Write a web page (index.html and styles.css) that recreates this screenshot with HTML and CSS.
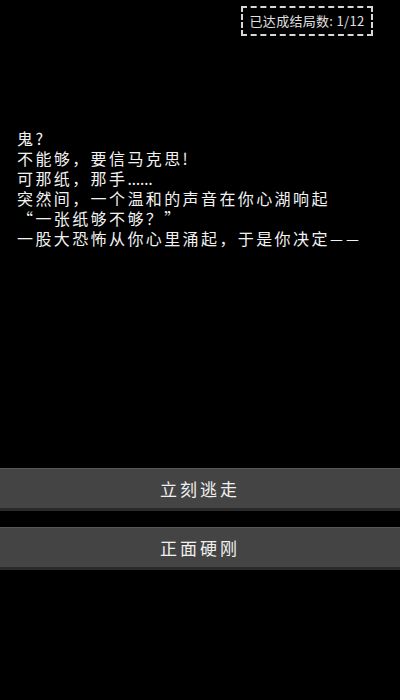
FILE: index.html
```html
<!DOCTYPE html>
<html lang="zh">
<head>
<meta charset="utf-8">
<link rel="stylesheet" href="styles.css">
</head>
<body>
<div class="page">
  <div class="status-row">
    <div class="status">已达成结局数: 1/12</div>
  </div>
  <div class="story">
    <p>鬼?</p>
    <p>不能够，要信马克思!</p>
    <p>可那纸，那手<span class="dots">……</span></p>
    <p>突然间，一个温和的声音在你心湖响起</p>
    <p>“一张纸够不够？”</p>
    <p>一股大恐怖从你心里涌起，于是你决定<span class="dash">—</span><span class="dash">—</span></p>
  </div>
  <div class="choices">
    <button class="choice">立刻逃走</button>
    <button class="choice">正面硬刚</button>
  </div>
</div>
</body>
</html>
```
FILE: styles.css
```css
html, body {
  margin: 0;
  padding: 0;
  background: #000;
}
body {
  width: 400px;
  height: 700px;
  overflow: hidden;
  font-family: "Noto Sans CJK SC", "Noto Sans", sans-serif;
  color: #f2f2f2;
}
.page {
  display: flex;
  flex-direction: column;
}
.status-row {
  display: flex;
  justify-content: flex-end;
  padding: 6px 27px 0 0;
}
.status {
  box-sizing: border-box;
  width: 132px;
  height: 30px;
  border: 2px dashed #d8d8d8;
  font-size: 13px;
  line-height: 26px;
  text-align: center;
  color: #e0e0e0;
  letter-spacing: 0.3px;
}
.story {
  margin-top: 92px;
  padding-left: 17px;
  font-size: 16px;
  line-height: 20px;
  letter-spacing: 2.4px;
}
.story p {
  margin: 0;
  height: 20px;
  white-space: nowrap;
}
.dots {
  font-family: "Noto Sans", sans-serif;
  letter-spacing: 0;
}
.dash {
  display: inline-block;
  width: 12px;
  margin-right: 4px;
  letter-spacing: 0;
  transform: scaleX(0.9);
  transform-origin: left center;
  font-variant-ligatures: none;
  font-feature-settings: "liga" 0, "calt" 0;
}
.choices {
  margin-top: 220px;
  display: flex;
  flex-direction: column;
  gap: 16px;
}
.choice {
  height: 43px;
  border: 0;
  border-top: 1px solid #565656;
  border-bottom: 3px solid #2a2a2a;
  background: #444;
  color: #f0f0f0;
  font-family: "Noto Sans CJK SC", "Noto Sans", sans-serif;
  font-size: 17px;
  letter-spacing: 3px;
  padding: 0;
}
```
